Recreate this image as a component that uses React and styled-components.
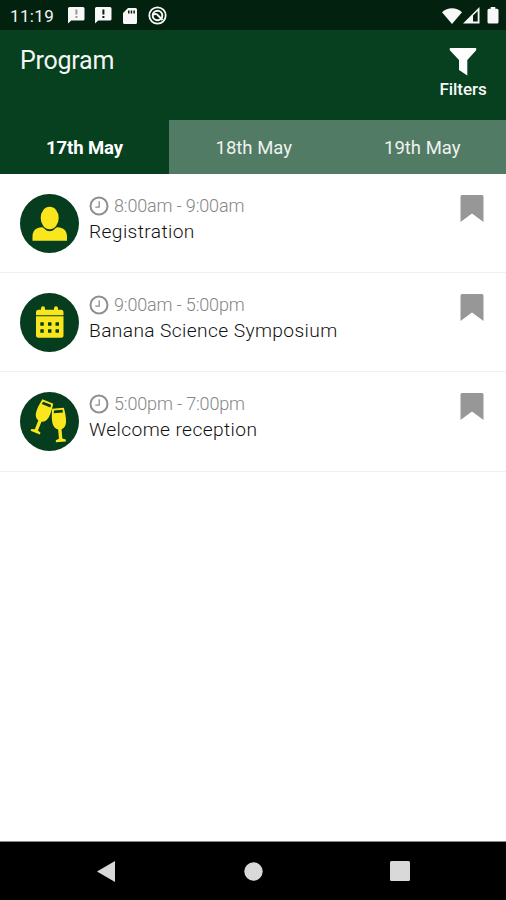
import React, { useState } from "react";
import styled, { createGlobalStyle } from "styled-components";

const GlobalStyle = createGlobalStyle`
  * {
    box-sizing: border-box;
  }
  body {
    margin: 0;
    background: #fff;
    font-family: Roboto, "Liberation Sans", sans-serif;
  }
`;

const Screen = styled.div`
  display: flex;
  flex-direction: column;
  width: 100%;
  height: 100vh;
  overflow: hidden;
`;

const StatusBar = styled.div`
  flex: none;
  display: flex;
  align-items: center;
  justify-content: space-between;
  height: 30px;
  padding: 1px 7px 0 10px;
  background: #03210f;
  color: #f4f4f4;
`;

const StatusGroup = styled.div`
  display: flex;
  align-items: center;
`;

const StatusTime = styled.span`
  width: 57px;
  font-size: 17px;
  line-height: 20px;
  letter-spacing: 0.35px;
`;

const StatusIcon = styled.svg`
  display: block;
  flex: none;
  margin-right: ${(props) => props.$gap || 0}px;
  fill: #f8f8f8;
`;

const Header = styled.header`
  flex: none;
  display: flex;
  justify-content: space-between;
  height: 90px;
  padding: 15px 18px 0 20px;
  background: #06401f;
  color: #f4f6f4;
`;

const Title = styled.h1`
  margin: 0;
  font-size: 25px;
  font-weight: 400;
  line-height: 31px;
  letter-spacing: -0.25px;
`;

const FilterButton = styled.button`
  display: flex;
  flex-direction: column;
  align-items: center;
  width: 50px;
  height: 60px;
  padding: 3px 0 0;
  border: 0;
  background: none;
  color: #f8f8f8;
  font-family: inherit;
  font-size: 17px;
  line-height: 20px;
  font-weight: 500;
  letter-spacing: -0.05px;
`;

const FilterIcon = styled.svg`
  display: block;
  margin-bottom: 3px;
  fill: #fff;
`;

const Tabs = styled.nav`
  flex: none;
  display: grid;
  grid-template-columns: 169px 1fr 1fr;
  height: 54px;
  background: #06401f;
`;

const Tab = styled.button`
  padding: ${(props) => (props.$active ? "2px 0 0" : "2px 0 0 1px")};
  border: 0;
  background: ${(props) => (props.$active ? "#06401f" : "#517b64")};
  color: ${(props) => (props.$active ? "#fff" : "#eef3f0")};
  font-family: inherit;
  font-size: 18.5px;
  font-weight: ${(props) => (props.$active ? 700 : 400)};
  letter-spacing: ${(props) => (props.$active ? "-0.1px" : "0")};
`;

const SessionList = styled.main`
  flex: 1;
  background: #fff;
`;

const SessionRow = styled.div`
  display: flex;
  height: 99.2px;
  padding: 20px 22px 0 20px;
  border-bottom: 1px solid #f0f0f0;
`;

const Badge = styled.div`
  flex: none;
  display: flex;
  width: 59px;
  height: 59px;
  border-radius: 50%;
  background: #053d1e;
  margin-right: 10px;

  svg {
    display: block;
    fill: #fae61c;
  }
`;

const SessionInfo = styled.div`
  flex: 1;
`;

const SessionTime = styled.div`
  display: flex;
  align-items: center;
  height: 24px;
  color: #868686;
  font-size: 18px;
  font-weight: 300;
  line-height: 22px;
  letter-spacing: -0.16px;

  svg {
    display: block;
    margin-right: 5px;
  }
`;

const SessionName = styled.div`
  font-size: 19.2px;
  font-weight: 300;
  line-height: 27px;
  letter-spacing: 0.38px;
  color: #111;
`;

const Bookmark = styled.svg`
  flex: none;
  display: block;
  margin-top: 1px;
  fill: #979797;
`;

const NavBar = styled.footer`
  flex: none;
  display: grid;
  grid-template-columns: 146px 1fr 146px;
  justify-content: center;
  align-items: center;
  justify-items: center;
  height: 59px;
  padding: 0 33px;
  border-top: 1px solid #888;
  background: #000;

  svg {
    display: block;
    fill: #d9d9d9;
  }
`;

const MessageIcon = ({ gap, mark }) => (
  <StatusIcon width="18" height="17" viewBox="0 0 18 17" $gap={gap}>
    <path d="M2.500 0h13.500a1.500 1.500 0 0 1 1.500 1.500v10.500a1.500 1.500 0 0 1-1.500 1.500H4.200L1 16.500V1.500A1.500 1.500 0 0 1 2.500 0z" />
    <path d="M8.400 2.500h2v5h-2zM8.400 9h2v2h-2z" fill={mark} />
  </StatusIcon>
);

const PersonIcon = () => (
  <svg width="59" height="59" viewBox="0 0 59 59">
    <ellipse cx="29.700" cy="24" rx="9" ry="11.300" />
    <path d="M12.500 46.800v-4c0-6 3.500-9.500 9.500-9.500 2.200 0 3.200 4 7.700 4s5.500-4 7.700-4c6 0 9.600 3.500 9.600 9.500v4z" />
  </svg>
);

const CalendarIcon = () => (
  <svg width="59" height="59" viewBox="0 0 59 59">
    <path d="M16 22.300v-3a2.500 2.500 0 0 1 2.500-2.500H21v-1.500a2 2 0 0 1 4 0v1.500h9v-1.500a2 2 0 0 1 4 0v1.500h3a2.500 2.500 0 0 1 2.500 2.500v3z" />
    <path d="M16 23.300h27.500v18.900a2.500 2.500 0 0 1-2.500 2.500H18.500a2.500 2.500 0 0 1-2.500-2.500z" />
    <g fill="#053d1e">
      {[29.3, 36.3].map((y) =>
        [20.3, 28, 35.5].map((x) => (
          <rect key={`${x}-${y}`} x={x} y={y} width="3.500" height="3.500" rx="0.500" />
        ))
      )}
    </g>
  </svg>
);

// drawn around its rim centre, so it can be tilted from there
const Glass = () => (
  <>
    <path d="M-5.900 0h11.800c.9 6 1.500 10 .9 14.500-.5 3.500-2.500 5.800-5.100 6.600V30.500l3.300 1.200v2H-5v-2l3.300-1.200v-9.400c-2.600-.8-4.600-3.100-5.100-6.600-.6-4.500 0-8.500.9-14.500z" />
    <path d="M-4.300 1.900h8.600l.3 2.700h-9.200z" fill="#053d1e" />
  </>
);

const GlassesIcon = () => (
  <svg width="59" height="59" viewBox="0 0 59 59">
    <g transform="translate(27.800 9.500) rotate(22)">
      <Glass />
    </g>
    <g transform="translate(38 16.300) rotate(-5)">
      <Glass />
    </g>
  </svg>
);

const ClockIcon = () => (
  <svg width="20" height="20" viewBox="0 0 20 20" fill="none" stroke="#8e8e8e">
    <circle cx="10" cy="10" r="8.500" strokeWidth="2" />
    <path d="M10.200 5.300v5.900H6.300" strokeWidth="1.300" />
  </svg>
);

const days = ["17th May", "18th May", "19th May"];

const sessions = [
  { time: "8:00am - 9:00am", name: "Registration", icon: PersonIcon },
  { time: "9:00am - 5:00pm", name: "Banana Science Symposium", icon: CalendarIcon },
  { time: "5:00pm - 7:00pm", name: "Welcome reception", icon: GlassesIcon },
];

const Session = ({ time, name, icon: Icon }) => (
  <SessionRow>
    <Badge>
      <Icon />
    </Badge>
    <SessionInfo>
      <SessionTime>
        <ClockIcon />
        {time}
      </SessionTime>
      <SessionName>{name}</SessionName>
    </SessionInfo>
    <Bookmark width="24" height="27" viewBox="0 0 24 27">
      <path d="M2 0h20a1.500 1.500 0 0 1 1.500 1.500V27L12 18.500.5 27V1.500A1.500 1.500 0 0 1 2 0z" />
    </Bookmark>
  </SessionRow>
);

const App = () => {
  const [day, setDay] = useState(0);

  return (
    <Screen>
      <GlobalStyle />
      <StatusBar>
        <StatusGroup>
          <StatusTime>11:19</StatusTime>
          <MessageIcon gap={9} mark="#999" />
          <MessageIcon gap={11} mark="#03210f" />
          <StatusIcon width="14" height="16" viewBox="0 0 14 16" $gap={11}>
            <path d="M5 0h7.500A1.500 1.500 0 0 1 14 1.500v13a1.500 1.500 0 0 1-1.500 1.500h-11A1.500 1.500 0 0 1 0 14.500V5z" />
            <path d="M5 2.500h1.500v3H5zM7.700 2.500h1.500v3H7.700zM10.400 2.500h1.500v3h-1.500z" fill="#03210f" />
          </StatusIcon>
          <StatusIcon width="19" height="19" viewBox="0 0 19 19">
            <g fill="none" stroke="#f8f8f8">
              <circle cx="9.500" cy="9.500" r="8.200" strokeWidth="1.800" />
              <circle cx="9.500" cy="9.500" r="4.800" strokeWidth="2" />
              <path d="M5 8.500c2.500-1 4.500-.5 5.500 1.500l4 4" strokeWidth="2" />
            </g>
          </StatusIcon>
        </StatusGroup>
        <StatusGroup>
          <StatusIcon width="20" height="16" viewBox="0 0 20 16" $gap={1}>
            <path d="M10 16 0 4.200C5.500-1.200 14.500-1.200 20 4.200z" />
          </StatusIcon>
          <StatusIcon width="17" height="17" viewBox="0 0 17 17" $gap={7}>
            <path fillRule="evenodd" d="M16.500 0v16.500H0zM10 8.500v6h4.700V4z" />
          </StatusIcon>
          <StatusIcon width="12" height="17" viewBox="0 0 12 17">
            <path d="M3.700 0h4.600v1.800H10A1.500 1.500 0 0 1 11.500 3.300V15a1.500 1.500 0 0 1-1.500 1.500H2A1.500 1.500 0 0 1 .5 15V3.300A1.500 1.500 0 0 1 2 1.800h1.700z" />
          </StatusIcon>
        </StatusGroup>
      </StatusBar>
      <Header>
        <Title>Program</Title>
        <FilterButton>
          <FilterIcon width="28" height="28" viewBox="0 0 28 28">
            <path d="M.8 0h26.400v2.300L18.300 12v15.500L10 22V12L.8 2.300z" />
          </FilterIcon>
          Filters
        </FilterButton>
      </Header>
      <Tabs>
        {days.map((label, i) => (
          <Tab key={label} $active={i === day} onClick={() => setDay(i)}>
            {label}
          </Tab>
        ))}
      </Tabs>
      <SessionList>
        {sessions.map((session) => (
          <Session key={session.name} {...session} />
        ))}
      </SessionList>
      <NavBar>
        <svg width="18" height="21" viewBox="0 0 18 21">
          <path d="M18 0v21L0 10.500z" />
        </svg>
        <svg width="19" height="19" viewBox="0 0 19 19">
          <circle cx="9.500" cy="9.500" r="9.200" />
        </svg>
        <svg width="20" height="20" viewBox="0 0 20 20">
          <rect width="20" height="20" rx="1.500" />
        </svg>
      </NavBar>
    </Screen>
  );
};

export default App;
